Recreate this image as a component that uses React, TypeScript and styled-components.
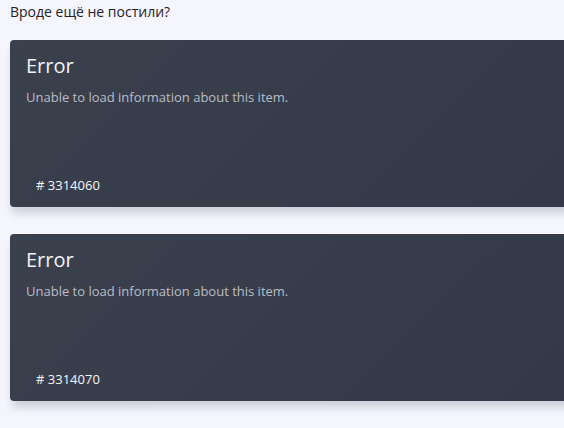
import React from "react";
import styled, { createGlobalStyle } from "styled-components";

const Global = createGlobalStyle`
  html, body { margin: 0; padding: 0; background: #f5f5fd; overflow: hidden; }
  body { font-family: "Open Sans", "Noto Sans", sans-serif; }
`;

const Page = styled.div`
  width: 564px;
  height: 428px;
  overflow: hidden;
  padding: 0 0 0 10px;
  box-sizing: border-box;
`;

const Heading = styled.div`
  font-family: "Open Sans", "Noto Sans", sans-serif;
  font-size: 14px;
  line-height: 20px;
  color: #1f2126;
  padding-top: 2px;
  margin-bottom: 18px;
`;

const List = styled.div`
  display: flex;
  flex-direction: column;
  gap: 27px;
  width: 620px;
`;

const Card = styled.div`
  height: 167px;
  box-sizing: border-box;
  border-radius: 4px;
  background: linear-gradient(135deg, #3b404d 0%, #363c4a 50%, #323847 100%);
  box-shadow: 0 8px 10px -2px rgba(60, 64, 90, 0.22);
  padding: 13px 16px 0 16px;
  display: flex;
  flex-direction: column;
`;

const Title = styled.div`
  font-family: "Open Sans", "Noto Sans", sans-serif;
  font-size: 20px;
  line-height: 26px;
  color: #f2f3f5;
`;

const Desc = styled.div`
  font-family: "Open Sans", "Noto Sans", sans-serif;
  font-size: 13px;
  line-height: 16px;
  color: #b9bdc6;
  margin-top: 10px;
`;

const Id = styled.div`
  margin-top: auto;
  margin-bottom: 14px;
  padding-left: 10px;
  font-family: "Open Sans", "Noto Sans", sans-serif;
  font-size: 13px;
  line-height: 16px;
  font-weight: 500;
  color: #f7f8fa;
`;

const items = ["3314060", "3314070"];

export default function App() {
  return (
    <Page>
      <Global />
      <Heading>Вроде ещё не постили?</Heading>
      <List>
        {items.map((id) => (
          <Card key={id}>
            <Title>Error</Title>
            <Desc>Unable to load information about this item.</Desc>
            <Id># {id}</Id>
          </Card>
        ))}
      </List>
    </Page>
  );
}
